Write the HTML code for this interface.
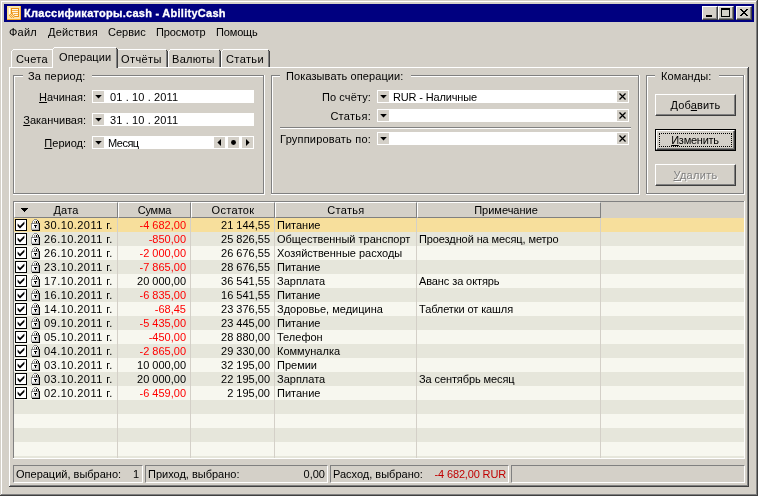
<!DOCTYPE html>
<html lang="ru"><head><meta charset="utf-8"><title>Классификаторы.cash - AbilityCash</title>
<style>
*{box-sizing:border-box;margin:0;padding:0}
html,body{width:758px;height:496px;overflow:hidden;background:#d4d0c8}
body{position:relative;font-family:"Liberation Sans","DejaVu Sans",sans-serif;font-size:11px;line-height:13px;color:#000;cursor:default}
.a{position:absolute;white-space:nowrap}
.t{position:absolute;white-space:nowrap;height:13px;line-height:13px;will-change:transform}
.r{text-align:right}
.c{text-align:center}
u{text-decoration:underline}
.red{color:#ff0000}
.w{background:#fff}
.g{background:#808080}
.d{background:#404040}
.f{background:#d4d0c8}
.k{background:#000}
.btn{position:absolute;background:#d4d0c8;border:1px solid;border-color:#fff #404040 #404040 #fff;box-shadow:inset -1px -1px 0 #808080, inset 1px 1px 0 #d4d0c8}
.eg{position:absolute;border:1px solid #808080}
.ew{position:absolute;border:1px solid #fff}
.sunk{position:absolute;border:1px solid;border-color:#808080 #fff #fff #808080}
.hdr{position:absolute;top:202px;height:16px;background:#d4d0c8;border:1px solid;border-color:#fff #808080 #808080 #fff}
</style></head>
<body>
<div class="a f" style="left:0px;top:0px;width:758px;height:496px;"></div>
<div class="a w" style="left:1px;top:1px;width:755px;height:1px;"></div>
<div class="a w" style="left:1px;top:1px;width:1px;height:493px;"></div>
<div class="a d" style="left:0px;top:495px;width:758px;height:1px;"></div>
<div class="a d" style="left:757px;top:0px;width:1px;height:496px;"></div>
<div class="a g" style="left:1px;top:494px;width:756px;height:1px;"></div>
<div class="a g" style="left:756px;top:1px;width:1px;height:494px;"></div>
<div class="a " style="left:4px;top:4px;width:750px;height:18px;background:#000080"></div>
<svg class="a" style="left:7px;top:6px" width="14" height="14" viewBox="0 0 14 14" shape-rendering="crispEdges">
<rect x="0" y="0" width="14" height="14" fill="#fbe3ae"/>
<rect x="0" y="0" width="14" height="1" fill="#fde9a0"/><rect x="0" y="0" width="1" height="14" fill="#fde08a"/>
<rect x="0" y="13" width="14" height="1" fill="#f6ab2c"/><rect x="13" y="0" width="1" height="14" fill="#f8b840"/>
<rect x="13" y="13" width="1" height="1" fill="#ef9510"/>
<rect x="2" y="2" width="1" height="10" fill="#ffffff"/>
<rect x="4" y="2" width="8" height="9" fill="#ec9214"/>
<rect x="5" y="3" width="6" height="7" fill="#f4ae48"/>
<rect x="5" y="3" width="6" height="1" fill="#fff6e4"/><rect x="5" y="5" width="6" height="1" fill="#fff6e4"/><rect x="6" y="7" width="5" height="1" fill="#fff6e4"/><rect x="8" y="9" width="3" height="1" fill="#fff6e4"/>
<rect x="2" y="8" width="6" height="4" fill="#fbdc9e"/>
<rect x="3" y="8" width="1" height="1" fill="#f0a030"/><rect x="5" y="8" width="1" height="1" fill="#f0a030"/><rect x="7" y="8" width="1" height="1" fill="#f0a030"/>
<rect x="2" y="9" width="1" height="1" fill="#f0a030"/><rect x="4" y="9" width="1" height="1" fill="#f0a030"/><rect x="6" y="9" width="1" height="1" fill="#f0a030"/>
<rect x="3" y="10" width="1" height="1" fill="#f0a030"/><rect x="5" y="10" width="1" height="1" fill="#f0a030"/><rect x="7" y="10" width="1" height="1" fill="#f0a030"/>
<rect x="4" y="11" width="1" height="1" fill="#f0a030"/><rect x="6" y="11" width="1" height="1" fill="#f0a030"/>
</svg>
<div class="t " style="left:24px;top:7px;color:#fff;font-weight:bold;letter-spacing:0.27px;-webkit-text-stroke:0.3px #fff;">Классификаторы.cash - AbilityCash</div>
<div class="btn" style="left:702px;top:6px;width:16px;height:14px"></div>
<div class="a k" style="left:706px;top:15px;width:6px;height:2px;"></div>
<div class="btn" style="left:718px;top:6px;width:16px;height:14px"></div>
<div class="a" style="left:721px;top:8px;width:9px;height:9px;border:1px solid #000;border-top-width:2px"></div>
<div class="btn" style="left:736px;top:6px;width:16px;height:14px"></div>
<svg class="a" style="left:740px;top:9px" width="8" height="7" viewBox="0 0 8 7" shape-rendering="crispEdges"><path d="M0 0h2v1h1v1h2v-1h1v-1h2v1h-1v1h-1v1h-1v1h1v1h1v1h1v1h-2v-1h-1v-1h-2v1h-1v1h-2v-1h1v-1h1v-1h1v-1h-1v-1h-1v-1h-1z" fill="#000"/></svg>
<div class="t " style="left:9px;top:26px;letter-spacing:0.2px;">Файл</div>
<div class="t " style="left:48px;top:26px;letter-spacing:0.2px;">Действия</div>
<div class="t " style="left:108px;top:26px;letter-spacing:0px;">Сервис</div>
<div class="t " style="left:156px;top:26px;letter-spacing:-0.1px;">Просмотр</div>
<div class="t " style="left:216px;top:26px;letter-spacing:-0.15px;">Помощь</div>
<div class="a f" style="left:9px;top:67px;width:740px;height:420px;"></div>
<div class="a w" style="left:9px;top:67px;width:739px;height:1px;"></div>
<div class="a w" style="left:9px;top:67px;width:1px;height:419px;"></div>
<div class="a d" style="left:9px;top:486px;width:740px;height:1px;"></div>
<div class="a d" style="left:748px;top:67px;width:1px;height:420px;"></div>
<div class="a g" style="left:10px;top:485px;width:738px;height:1px;"></div>
<div class="a g" style="left:747px;top:68px;width:1px;height:418px;"></div>
<div class="a" style="left:11px;top:49px;width:44px;height:18px"><div class="a f" style="left:1px;top:2px;width:41px;height:16px"></div><div class="a f" style="left:2px;top:1px;width:40px;height:1px"></div><div class="a w" style="left:2px;top:0;width:40px;height:1px"></div><div class="a w" style="left:1px;top:1px;width:1px;height:1px"></div><div class="a w" style="left:0;top:2px;width:1px;height:16px"></div><div class="a d" style="left:43px;top:2px;width:1px;height:16px"></div><div class="a d" style="left:42px;top:1px;width:1px;height:1px"></div><div class="a g" style="left:42px;top:2px;width:1px;height:16px"></div></div>
<div class="t " style="left:16px;top:53px;letter-spacing:0.3px;">Счета</div>
<div class="a" style="left:116px;top:49px;width:52px;height:18px"><div class="a f" style="left:1px;top:2px;width:49px;height:16px"></div><div class="a f" style="left:2px;top:1px;width:48px;height:1px"></div><div class="a w" style="left:2px;top:0;width:48px;height:1px"></div><div class="a w" style="left:1px;top:1px;width:1px;height:1px"></div><div class="a w" style="left:0;top:2px;width:1px;height:16px"></div><div class="a d" style="left:51px;top:2px;width:1px;height:16px"></div><div class="a d" style="left:50px;top:1px;width:1px;height:1px"></div><div class="a g" style="left:50px;top:2px;width:1px;height:16px"></div></div>
<div class="t " style="left:121px;top:53px;letter-spacing:0.4px;">Отчёты</div>
<div class="a" style="left:168px;top:49px;width:53px;height:18px"><div class="a f" style="left:1px;top:2px;width:50px;height:16px"></div><div class="a f" style="left:2px;top:1px;width:49px;height:1px"></div><div class="a w" style="left:2px;top:0;width:49px;height:1px"></div><div class="a w" style="left:1px;top:1px;width:1px;height:1px"></div><div class="a w" style="left:0;top:2px;width:1px;height:16px"></div><div class="a d" style="left:52px;top:2px;width:1px;height:16px"></div><div class="a d" style="left:51px;top:1px;width:1px;height:1px"></div><div class="a g" style="left:51px;top:2px;width:1px;height:16px"></div></div>
<div class="t " style="left:172px;top:53px;letter-spacing:0.3px;">Валюты</div>
<div class="a" style="left:221px;top:49px;width:49px;height:18px"><div class="a f" style="left:1px;top:2px;width:46px;height:16px"></div><div class="a f" style="left:2px;top:1px;width:45px;height:1px"></div><div class="a w" style="left:2px;top:0;width:45px;height:1px"></div><div class="a w" style="left:1px;top:1px;width:1px;height:1px"></div><div class="a w" style="left:0;top:2px;width:1px;height:16px"></div><div class="a d" style="left:48px;top:2px;width:1px;height:16px"></div><div class="a d" style="left:47px;top:1px;width:1px;height:1px"></div><div class="a g" style="left:47px;top:2px;width:1px;height:16px"></div></div>
<div class="t " style="left:226px;top:53px;letter-spacing:0.4px;">Статьи</div>
<div class="a" style="left:52px;top:47px;width:66px;height:21px"><div class="a f" style="left:1px;top:2px;width:63px;height:19px"></div><div class="a f" style="left:2px;top:1px;width:62px;height:1px"></div><div class="a w" style="left:2px;top:0;width:62px;height:1px"></div><div class="a w" style="left:1px;top:1px;width:1px;height:1px"></div><div class="a w" style="left:0;top:2px;width:1px;height:19px"></div><div class="a d" style="left:65px;top:2px;width:1px;height:19px"></div><div class="a d" style="left:64px;top:1px;width:1px;height:1px"></div><div class="a g" style="left:64px;top:2px;width:1px;height:19px"></div></div>
<div class="t " style="left:59px;top:51px;letter-spacing:0.1px;">Операции</div>
<div class="ew" style="left:14px;top:76px;width:251px;height:119px"></div>
<div class="eg" style="left:13px;top:75px;width:251px;height:119px"></div>
<div class="a w" style="left:13px;top:194px;width:1px;height:1px;"></div>
<div class="a w" style="left:264px;top:75px;width:1px;height:1px;"></div>
<div class="a f" style="left:23px;top:75px;width:69px;height:2px;"></div>
<div class="t " style="left:28px;top:70px;letter-spacing:0.2px;">За период:</div>
<div class="ew" style="left:272px;top:76px;width:368px;height:119px"></div>
<div class="eg" style="left:271px;top:75px;width:368px;height:119px"></div>
<div class="a w" style="left:271px;top:194px;width:1px;height:1px;"></div>
<div class="a w" style="left:639px;top:75px;width:1px;height:1px;"></div>
<div class="a f" style="left:280px;top:75px;width:131px;height:2px;"></div>
<div class="t " style="left:286px;top:70px;letter-spacing:0.1px;">Показывать операции:</div>
<div class="ew" style="left:647px;top:76px;width:98px;height:119px"></div>
<div class="eg" style="left:646px;top:75px;width:98px;height:119px"></div>
<div class="a w" style="left:646px;top:194px;width:1px;height:1px;"></div>
<div class="a w" style="left:744px;top:75px;width:1px;height:1px;"></div>
<div class="a f" style="left:655px;top:75px;width:64px;height:2px;"></div>
<div class="t " style="left:661px;top:70px;letter-spacing:0.1px;">Команды:</div>
<div class="t r" style="left:20px;top:91px;width:66px;"><u>Н</u>ачиная:</div>
<div class="a w" style="left:92px;top:90px;width:162px;height:13px;"></div>
<div class="a f" style="left:93px;top:91px;width:11px;height:11px;"></div>
<svg class="a" style="left:95px;top:95px" width="7" height="4" viewBox="0 0 7 4"><path d="M0.2 0H6.8L3.5 3.5Z" fill="#000"/></svg>
<div class="t " style="left:110px;top:91px;"><span style="letter-spacing:0.12px">01 . 10 . 2011</span></div>
<div class="t r" style="left:20px;top:114px;width:66px;"><u>З</u>аканчивая:</div>
<div class="a w" style="left:92px;top:113px;width:162px;height:13px;"></div>
<div class="a f" style="left:93px;top:114px;width:11px;height:11px;"></div>
<svg class="a" style="left:95px;top:118px" width="7" height="4" viewBox="0 0 7 4"><path d="M0.2 0H6.8L3.5 3.5Z" fill="#000"/></svg>
<div class="t " style="left:110px;top:114px;"><span style="letter-spacing:0.12px">31 . 10 . 2011</span></div>
<div class="t r" style="left:20px;top:137px;width:66px;"><u>П</u>ериод:</div>
<div class="a w" style="left:92px;top:136px;width:162px;height:13px;"></div>
<div class="a f" style="left:93px;top:137px;width:11px;height:11px;"></div>
<svg class="a" style="left:95px;top:141px" width="7" height="4" viewBox="0 0 7 4"><path d="M0.2 0H6.8L3.5 3.5Z" fill="#000"/></svg>
<div class="t " style="left:108px;top:137px;"><span style="letter-spacing:-0.5px">Месяц</span></div>
<div class="a f" style="left:214px;top:137px;width:11px;height:11px;"></div>
<svg class="a" style="left:217px;top:139px" width="4" height="7" viewBox="0 0 4 7"><path d="M4 0V7L0.4 3.5Z" fill="#000"/></svg>
<div class="a f" style="left:228px;top:137px;width:11px;height:11px;"></div>
<svg class="a" style="left:231px;top:140px" width="5" height="5" viewBox="0 0 5 5"><circle cx="2.5" cy="2.5" r="2.45" fill="#000"/></svg>
<div class="a f" style="left:242px;top:137px;width:11px;height:11px;"></div>
<svg class="a" style="left:246px;top:139px" width="4" height="7" viewBox="0 0 4 7"><path d="M0 0V7L3.6 3.5Z" fill="#000"/></svg>
<div class="t r" style="left:280px;top:91px;width:91px;letter-spacing:0.12px;">По счёту:</div>
<div class="a w" style="left:377px;top:90px;width:252px;height:13px;"></div>
<div class="a f" style="left:378px;top:91px;width:11px;height:11px;"></div>
<svg class="a" style="left:380px;top:95px" width="7" height="4" viewBox="0 0 7 4"><path d="M0.2 0H6.8L3.5 3.5Z" fill="#000"/></svg>
<div class="t " style="left:393px;top:91px;"><span style="letter-spacing:-0.15px">RUR - Наличные</span></div>
<div class="a f" style="left:617px;top:91px;width:11px;height:11px;"></div>
<svg class="a" style="left:619px;top:93px" width="7" height="7" viewBox="0 0 7 7"><path d="M0.5 0.5L6.5 6.5M6.5 0.5L0.5 6.5" stroke="#000" stroke-width="1.25" stroke-linecap="butt" fill="none"/></svg>
<div class="t r" style="left:280px;top:110px;width:91px;letter-spacing:0.3px;">Статья:</div>
<div class="a w" style="left:377px;top:109px;width:252px;height:13px;"></div>
<div class="a f" style="left:378px;top:110px;width:11px;height:11px;"></div>
<svg class="a" style="left:380px;top:114px" width="7" height="4" viewBox="0 0 7 4"><path d="M0.2 0H6.8L3.5 3.5Z" fill="#000"/></svg>
<div class="a f" style="left:617px;top:110px;width:11px;height:11px;"></div>
<svg class="a" style="left:619px;top:112px" width="7" height="7" viewBox="0 0 7 7"><path d="M0.5 0.5L6.5 6.5M6.5 0.5L0.5 6.5" stroke="#000" stroke-width="1.25" stroke-linecap="butt" fill="none"/></svg>
<div class="a g" style="left:280px;top:127px;width:351px;height:1px;"></div>
<div class="a w" style="left:280px;top:128px;width:351px;height:1px;"></div>
<div class="t r" style="left:270px;top:133px;width:101px;letter-spacing:0.2px;">Группировать по:</div>
<div class="a w" style="left:377px;top:132px;width:252px;height:13px;"></div>
<div class="a f" style="left:378px;top:133px;width:11px;height:11px;"></div>
<svg class="a" style="left:380px;top:137px" width="7" height="4" viewBox="0 0 7 4"><path d="M0.2 0H6.8L3.5 3.5Z" fill="#000"/></svg>
<div class="a f" style="left:617px;top:133px;width:11px;height:11px;"></div>
<svg class="a" style="left:619px;top:135px" width="7" height="7" viewBox="0 0 7 7"><path d="M0.5 0.5L6.5 6.5M6.5 0.5L0.5 6.5" stroke="#000" stroke-width="1.25" stroke-linecap="butt" fill="none"/></svg>
<div class="btn" style="left:655px;top:94px;width:81px;height:22px"></div>
<div class="t c" style="left:655px;top:99px;width:81px;"><span style="letter-spacing:0.15px">Доб<u>а</u>вить</span></div>
<div class="a k" style="left:655px;top:129px;width:81px;height:22px;"></div>
<div class="btn" style="left:656px;top:130px;width:79px;height:20px;border-color:#fff #404040 #404040 #fff"></div>
<div class="a" style="left:659px;top:133px;width:73px;height:14px;border:1px dotted #000"></div>
<div class="t c" style="left:655px;top:134px;width:81px;"><span style="letter-spacing:-0.25px;position:relative;left:-0.5px"><u>И</u>зменить</span></div>
<div class="btn" style="left:655px;top:164px;width:81px;height:22px"></div>
<div class="t c" style="left:655px;top:169px;width:81px;color:#808080;text-shadow:1px 1px 0 #fff;"><span style="letter-spacing:0.3px"><u>У</u>далить</span></div>
<div class="a " style="left:13px;top:201px;width:732px;height:258px;background:#f7f7ef"></div>
<div class="a " style="left:14px;top:218px;width:730px;height:14px;background:#f7df9c"></div>
<div class="a " style="left:14px;top:232px;width:730px;height:14px;background:#e6e6db"></div>
<div class="a " style="left:14px;top:246px;width:730px;height:14px;background:#f7f7ef"></div>
<div class="a " style="left:14px;top:260px;width:730px;height:14px;background:#e6e6db"></div>
<div class="a " style="left:14px;top:274px;width:730px;height:14px;background:#f7f7ef"></div>
<div class="a " style="left:14px;top:288px;width:730px;height:14px;background:#e6e6db"></div>
<div class="a " style="left:14px;top:302px;width:730px;height:14px;background:#f7f7ef"></div>
<div class="a " style="left:14px;top:316px;width:730px;height:14px;background:#e6e6db"></div>
<div class="a " style="left:14px;top:330px;width:730px;height:14px;background:#f7f7ef"></div>
<div class="a " style="left:14px;top:344px;width:730px;height:14px;background:#e6e6db"></div>
<div class="a " style="left:14px;top:358px;width:730px;height:14px;background:#f7f7ef"></div>
<div class="a " style="left:14px;top:372px;width:730px;height:14px;background:#e6e6db"></div>
<div class="a " style="left:14px;top:386px;width:730px;height:14px;background:#f7f7ef"></div>
<div class="a " style="left:14px;top:400px;width:730px;height:14px;background:#e6e6db"></div>
<div class="a " style="left:14px;top:414px;width:730px;height:14px;background:#f7f7ef"></div>
<div class="a " style="left:14px;top:428px;width:730px;height:14px;background:#e6e6db"></div>
<div class="a " style="left:14px;top:442px;width:730px;height:14px;background:#f7f7ef"></div>
<div class="a " style="left:14px;top:456px;width:730px;height:2px;background:#e6e6db"></div>
<div class="a " style="left:117px;top:218px;width:1px;height:240px;background:#d4d0c8"></div>
<div class="a " style="left:190px;top:218px;width:1px;height:240px;background:#d4d0c8"></div>
<div class="a " style="left:274px;top:218px;width:1px;height:240px;background:#d4d0c8"></div>
<div class="a " style="left:416px;top:218px;width:1px;height:240px;background:#d4d0c8"></div>
<div class="a " style="left:600px;top:218px;width:1px;height:240px;background:#d4d0c8"></div>
<div class="a f" style="left:14px;top:202px;width:730px;height:16px;"></div>
<div class="hdr" style="left:14px;width:104px"></div>
<div class="t c" style="left:14px;top:204px;width:104px;letter-spacing:0.2px;">Дата</div>
<div class="hdr" style="left:118px;width:73px"></div>
<div class="t c" style="left:118px;top:204px;width:73px;letter-spacing:-0.2px;">Сумма</div>
<div class="hdr" style="left:191px;width:84px"></div>
<div class="t c" style="left:191px;top:204px;width:84px;letter-spacing:0.3px;">Остаток</div>
<div class="hdr" style="left:275px;width:142px"></div>
<div class="t c" style="left:275px;top:204px;width:142px;letter-spacing:0.3px;">Статья</div>
<div class="hdr" style="left:417px;width:184px"></div>
<div class="t c" style="left:414px;top:204px;width:184px;">Примечание</div>
<svg class="a" style="left:21px;top:208px" width="7" height="4" viewBox="0 0 7 4" shape-rendering="crispEdges"><path d="M0 0h7v1h-1v1h-1v1h-1v1h-1v-1h-1v-1h-1v-1h-1z" fill="#000"/></svg>
<div class="a" style="left:15px;top:219px;width:12px;height:12px;background:#fff;border:1px solid #000"></div>
<svg class="a" style="left:17px;top:221px" width="8" height="8" viewBox="0 0 8 8"><path d="M0.6 2.6L0.6 5L3 7.4L7.4 3L7.4 0.6L3 5Z" fill="#000"/></svg>
<svg class="a" style="left:31px;top:219px" width="9" height="12" viewBox="0 0 9 12" shape-rendering="crispEdges"><rect x="3" y="0" width="3" height="1" fill="#909090"/><rect x="2" y="1" width="1" height="1" fill="#a0a0a0"/><rect x="3" y="1" width="1" height="1" fill="#ffffff"/><rect x="4" y="1" width="1" height="1" fill="#e0e0e0"/><rect x="5" y="1" width="1" height="1" fill="#ffffff"/><rect x="6" y="1" width="1" height="1" fill="#383838"/><rect x="1" y="2" width="1" height="1" fill="#909090"/><rect x="2" y="2" width="1" height="1" fill="#ffffff"/><rect x="3" y="2" width="1" height="1" fill="#909090"/><rect x="5" y="2" width="1" height="1" fill="#000000"/><rect x="6" y="2" width="1" height="1" fill="#e0e0e0"/><rect x="7" y="2" width="1" height="1" fill="#000000"/><rect x="1" y="3" width="1" height="1" fill="#909090"/><rect x="2" y="3" width="1" height="1" fill="#ffffff"/><rect x="3" y="3" width="1" height="1" fill="#909090"/><rect x="5" y="3" width="1" height="1" fill="#000000"/><rect x="6" y="3" width="1" height="1" fill="#e0e0e0"/><rect x="7" y="3" width="1" height="1" fill="#000000"/><rect x="0" y="4" width="8" height="1" fill="#808080"/><rect x="8" y="4" width="1" height="1" fill="#000000"/><rect x="0" y="5" width="1" height="1" fill="#909090"/><rect x="1" y="5" width="5" height="1" fill="#ffffff"/><rect x="6" y="5" width="1" height="1" fill="#e0e0e0"/><rect x="7" y="5" width="1" height="1" fill="#b0b0b0"/><rect x="8" y="5" width="1" height="1" fill="#000000"/><rect x="0" y="6" width="1" height="1" fill="#909090"/><rect x="1" y="6" width="2" height="1" fill="#ffffff"/><rect x="3" y="6" width="3" height="1" fill="#000000"/><rect x="6" y="6" width="1" height="1" fill="#e0e0e0"/><rect x="7" y="6" width="1" height="1" fill="#b0b0b0"/><rect x="8" y="6" width="1" height="1" fill="#000000"/><rect x="0" y="7" width="1" height="1" fill="#909090"/><rect x="1" y="7" width="2" height="1" fill="#ffffff"/><rect x="3" y="7" width="1" height="1" fill="#e0e0e0"/><rect x="4" y="7" width="1" height="1" fill="#000000"/><rect x="5" y="7" width="2" height="1" fill="#e0e0e0"/><rect x="7" y="7" width="1" height="1" fill="#b0b0b0"/><rect x="8" y="7" width="1" height="1" fill="#000000"/><rect x="0" y="8" width="1" height="1" fill="#909090"/><rect x="1" y="8" width="1" height="1" fill="#ffffff"/><rect x="2" y="8" width="1" height="1" fill="#e0e0e0"/><rect x="3" y="8" width="1" height="1" fill="#ffffff"/><rect x="4" y="8" width="1" height="1" fill="#000000"/><rect x="5" y="8" width="2" height="1" fill="#e0e0e0"/><rect x="7" y="8" width="1" height="1" fill="#b0b0b0"/><rect x="8" y="8" width="1" height="1" fill="#000000"/><rect x="0" y="9" width="1" height="1" fill="#909090"/><rect x="1" y="9" width="6" height="1" fill="#e0e0e0"/><rect x="7" y="9" width="1" height="1" fill="#b0b0b0"/><rect x="8" y="9" width="1" height="1" fill="#000000"/><rect x="0" y="10" width="1" height="1" fill="#909090"/><rect x="1" y="10" width="7" height="1" fill="#b0b0b0"/><rect x="8" y="10" width="1" height="1" fill="#000000"/><rect x="1" y="11" width="8" height="1" fill="#000000"/></svg>
<div class="t " style="left:44px;top:219px;letter-spacing:0.45px;">30.10.2011 г.</div>
<div class="t r red" style="left:118px;top:219px;width:68px;">-4 682,00</div>
<div class="t r" style="left:191px;top:219px;width:79px;">21 144,55</div>
<div class="t " style="left:277px;top:219px;">Питание</div>
<div class="t " style="left:419px;top:219px;letter-spacing:-0.1px;"></div>
<div class="a" style="left:15px;top:233px;width:12px;height:12px;background:#fff;border:1px solid #000"></div>
<svg class="a" style="left:17px;top:235px" width="8" height="8" viewBox="0 0 8 8"><path d="M0.6 2.6L0.6 5L3 7.4L7.4 3L7.4 0.6L3 5Z" fill="#000"/></svg>
<svg class="a" style="left:31px;top:233px" width="9" height="12" viewBox="0 0 9 12" shape-rendering="crispEdges"><rect x="3" y="0" width="3" height="1" fill="#909090"/><rect x="2" y="1" width="1" height="1" fill="#a0a0a0"/><rect x="3" y="1" width="1" height="1" fill="#ffffff"/><rect x="4" y="1" width="1" height="1" fill="#e0e0e0"/><rect x="5" y="1" width="1" height="1" fill="#ffffff"/><rect x="6" y="1" width="1" height="1" fill="#383838"/><rect x="1" y="2" width="1" height="1" fill="#909090"/><rect x="2" y="2" width="1" height="1" fill="#ffffff"/><rect x="3" y="2" width="1" height="1" fill="#909090"/><rect x="5" y="2" width="1" height="1" fill="#000000"/><rect x="6" y="2" width="1" height="1" fill="#e0e0e0"/><rect x="7" y="2" width="1" height="1" fill="#000000"/><rect x="1" y="3" width="1" height="1" fill="#909090"/><rect x="2" y="3" width="1" height="1" fill="#ffffff"/><rect x="3" y="3" width="1" height="1" fill="#909090"/><rect x="5" y="3" width="1" height="1" fill="#000000"/><rect x="6" y="3" width="1" height="1" fill="#e0e0e0"/><rect x="7" y="3" width="1" height="1" fill="#000000"/><rect x="0" y="4" width="8" height="1" fill="#808080"/><rect x="8" y="4" width="1" height="1" fill="#000000"/><rect x="0" y="5" width="1" height="1" fill="#909090"/><rect x="1" y="5" width="5" height="1" fill="#ffffff"/><rect x="6" y="5" width="1" height="1" fill="#e0e0e0"/><rect x="7" y="5" width="1" height="1" fill="#b0b0b0"/><rect x="8" y="5" width="1" height="1" fill="#000000"/><rect x="0" y="6" width="1" height="1" fill="#909090"/><rect x="1" y="6" width="2" height="1" fill="#ffffff"/><rect x="3" y="6" width="3" height="1" fill="#000000"/><rect x="6" y="6" width="1" height="1" fill="#e0e0e0"/><rect x="7" y="6" width="1" height="1" fill="#b0b0b0"/><rect x="8" y="6" width="1" height="1" fill="#000000"/><rect x="0" y="7" width="1" height="1" fill="#909090"/><rect x="1" y="7" width="2" height="1" fill="#ffffff"/><rect x="3" y="7" width="1" height="1" fill="#e0e0e0"/><rect x="4" y="7" width="1" height="1" fill="#000000"/><rect x="5" y="7" width="2" height="1" fill="#e0e0e0"/><rect x="7" y="7" width="1" height="1" fill="#b0b0b0"/><rect x="8" y="7" width="1" height="1" fill="#000000"/><rect x="0" y="8" width="1" height="1" fill="#909090"/><rect x="1" y="8" width="1" height="1" fill="#ffffff"/><rect x="2" y="8" width="1" height="1" fill="#e0e0e0"/><rect x="3" y="8" width="1" height="1" fill="#ffffff"/><rect x="4" y="8" width="1" height="1" fill="#000000"/><rect x="5" y="8" width="2" height="1" fill="#e0e0e0"/><rect x="7" y="8" width="1" height="1" fill="#b0b0b0"/><rect x="8" y="8" width="1" height="1" fill="#000000"/><rect x="0" y="9" width="1" height="1" fill="#909090"/><rect x="1" y="9" width="6" height="1" fill="#e0e0e0"/><rect x="7" y="9" width="1" height="1" fill="#b0b0b0"/><rect x="8" y="9" width="1" height="1" fill="#000000"/><rect x="0" y="10" width="1" height="1" fill="#909090"/><rect x="1" y="10" width="7" height="1" fill="#b0b0b0"/><rect x="8" y="10" width="1" height="1" fill="#000000"/><rect x="1" y="11" width="8" height="1" fill="#000000"/></svg>
<div class="t " style="left:44px;top:233px;letter-spacing:0.45px;">26.10.2011 г.</div>
<div class="t r red" style="left:118px;top:233px;width:68px;">-850,00</div>
<div class="t r" style="left:191px;top:233px;width:79px;">25 826,55</div>
<div class="t " style="left:277px;top:233px;">Общественный транспорт</div>
<div class="t " style="left:419px;top:233px;letter-spacing:-0.1px;">Проездной на месяц, метро</div>
<div class="a" style="left:15px;top:247px;width:12px;height:12px;background:#fff;border:1px solid #000"></div>
<svg class="a" style="left:17px;top:249px" width="8" height="8" viewBox="0 0 8 8"><path d="M0.6 2.6L0.6 5L3 7.4L7.4 3L7.4 0.6L3 5Z" fill="#000"/></svg>
<svg class="a" style="left:31px;top:247px" width="9" height="12" viewBox="0 0 9 12" shape-rendering="crispEdges"><rect x="3" y="0" width="3" height="1" fill="#909090"/><rect x="2" y="1" width="1" height="1" fill="#a0a0a0"/><rect x="3" y="1" width="1" height="1" fill="#ffffff"/><rect x="4" y="1" width="1" height="1" fill="#e0e0e0"/><rect x="5" y="1" width="1" height="1" fill="#ffffff"/><rect x="6" y="1" width="1" height="1" fill="#383838"/><rect x="1" y="2" width="1" height="1" fill="#909090"/><rect x="2" y="2" width="1" height="1" fill="#ffffff"/><rect x="3" y="2" width="1" height="1" fill="#909090"/><rect x="5" y="2" width="1" height="1" fill="#000000"/><rect x="6" y="2" width="1" height="1" fill="#e0e0e0"/><rect x="7" y="2" width="1" height="1" fill="#000000"/><rect x="1" y="3" width="1" height="1" fill="#909090"/><rect x="2" y="3" width="1" height="1" fill="#ffffff"/><rect x="3" y="3" width="1" height="1" fill="#909090"/><rect x="5" y="3" width="1" height="1" fill="#000000"/><rect x="6" y="3" width="1" height="1" fill="#e0e0e0"/><rect x="7" y="3" width="1" height="1" fill="#000000"/><rect x="0" y="4" width="8" height="1" fill="#808080"/><rect x="8" y="4" width="1" height="1" fill="#000000"/><rect x="0" y="5" width="1" height="1" fill="#909090"/><rect x="1" y="5" width="5" height="1" fill="#ffffff"/><rect x="6" y="5" width="1" height="1" fill="#e0e0e0"/><rect x="7" y="5" width="1" height="1" fill="#b0b0b0"/><rect x="8" y="5" width="1" height="1" fill="#000000"/><rect x="0" y="6" width="1" height="1" fill="#909090"/><rect x="1" y="6" width="2" height="1" fill="#ffffff"/><rect x="3" y="6" width="3" height="1" fill="#000000"/><rect x="6" y="6" width="1" height="1" fill="#e0e0e0"/><rect x="7" y="6" width="1" height="1" fill="#b0b0b0"/><rect x="8" y="6" width="1" height="1" fill="#000000"/><rect x="0" y="7" width="1" height="1" fill="#909090"/><rect x="1" y="7" width="2" height="1" fill="#ffffff"/><rect x="3" y="7" width="1" height="1" fill="#e0e0e0"/><rect x="4" y="7" width="1" height="1" fill="#000000"/><rect x="5" y="7" width="2" height="1" fill="#e0e0e0"/><rect x="7" y="7" width="1" height="1" fill="#b0b0b0"/><rect x="8" y="7" width="1" height="1" fill="#000000"/><rect x="0" y="8" width="1" height="1" fill="#909090"/><rect x="1" y="8" width="1" height="1" fill="#ffffff"/><rect x="2" y="8" width="1" height="1" fill="#e0e0e0"/><rect x="3" y="8" width="1" height="1" fill="#ffffff"/><rect x="4" y="8" width="1" height="1" fill="#000000"/><rect x="5" y="8" width="2" height="1" fill="#e0e0e0"/><rect x="7" y="8" width="1" height="1" fill="#b0b0b0"/><rect x="8" y="8" width="1" height="1" fill="#000000"/><rect x="0" y="9" width="1" height="1" fill="#909090"/><rect x="1" y="9" width="6" height="1" fill="#e0e0e0"/><rect x="7" y="9" width="1" height="1" fill="#b0b0b0"/><rect x="8" y="9" width="1" height="1" fill="#000000"/><rect x="0" y="10" width="1" height="1" fill="#909090"/><rect x="1" y="10" width="7" height="1" fill="#b0b0b0"/><rect x="8" y="10" width="1" height="1" fill="#000000"/><rect x="1" y="11" width="8" height="1" fill="#000000"/></svg>
<div class="t " style="left:44px;top:247px;letter-spacing:0.45px;">26.10.2011 г.</div>
<div class="t r red" style="left:118px;top:247px;width:68px;">-2 000,00</div>
<div class="t r" style="left:191px;top:247px;width:79px;">26 676,55</div>
<div class="t " style="left:277px;top:247px;">Хозяйственные расходы</div>
<div class="t " style="left:419px;top:247px;letter-spacing:-0.1px;"></div>
<div class="a" style="left:15px;top:261px;width:12px;height:12px;background:#fff;border:1px solid #000"></div>
<svg class="a" style="left:17px;top:263px" width="8" height="8" viewBox="0 0 8 8"><path d="M0.6 2.6L0.6 5L3 7.4L7.4 3L7.4 0.6L3 5Z" fill="#000"/></svg>
<svg class="a" style="left:31px;top:261px" width="9" height="12" viewBox="0 0 9 12" shape-rendering="crispEdges"><rect x="3" y="0" width="3" height="1" fill="#909090"/><rect x="2" y="1" width="1" height="1" fill="#a0a0a0"/><rect x="3" y="1" width="1" height="1" fill="#ffffff"/><rect x="4" y="1" width="1" height="1" fill="#e0e0e0"/><rect x="5" y="1" width="1" height="1" fill="#ffffff"/><rect x="6" y="1" width="1" height="1" fill="#383838"/><rect x="1" y="2" width="1" height="1" fill="#909090"/><rect x="2" y="2" width="1" height="1" fill="#ffffff"/><rect x="3" y="2" width="1" height="1" fill="#909090"/><rect x="5" y="2" width="1" height="1" fill="#000000"/><rect x="6" y="2" width="1" height="1" fill="#e0e0e0"/><rect x="7" y="2" width="1" height="1" fill="#000000"/><rect x="1" y="3" width="1" height="1" fill="#909090"/><rect x="2" y="3" width="1" height="1" fill="#ffffff"/><rect x="3" y="3" width="1" height="1" fill="#909090"/><rect x="5" y="3" width="1" height="1" fill="#000000"/><rect x="6" y="3" width="1" height="1" fill="#e0e0e0"/><rect x="7" y="3" width="1" height="1" fill="#000000"/><rect x="0" y="4" width="8" height="1" fill="#808080"/><rect x="8" y="4" width="1" height="1" fill="#000000"/><rect x="0" y="5" width="1" height="1" fill="#909090"/><rect x="1" y="5" width="5" height="1" fill="#ffffff"/><rect x="6" y="5" width="1" height="1" fill="#e0e0e0"/><rect x="7" y="5" width="1" height="1" fill="#b0b0b0"/><rect x="8" y="5" width="1" height="1" fill="#000000"/><rect x="0" y="6" width="1" height="1" fill="#909090"/><rect x="1" y="6" width="2" height="1" fill="#ffffff"/><rect x="3" y="6" width="3" height="1" fill="#000000"/><rect x="6" y="6" width="1" height="1" fill="#e0e0e0"/><rect x="7" y="6" width="1" height="1" fill="#b0b0b0"/><rect x="8" y="6" width="1" height="1" fill="#000000"/><rect x="0" y="7" width="1" height="1" fill="#909090"/><rect x="1" y="7" width="2" height="1" fill="#ffffff"/><rect x="3" y="7" width="1" height="1" fill="#e0e0e0"/><rect x="4" y="7" width="1" height="1" fill="#000000"/><rect x="5" y="7" width="2" height="1" fill="#e0e0e0"/><rect x="7" y="7" width="1" height="1" fill="#b0b0b0"/><rect x="8" y="7" width="1" height="1" fill="#000000"/><rect x="0" y="8" width="1" height="1" fill="#909090"/><rect x="1" y="8" width="1" height="1" fill="#ffffff"/><rect x="2" y="8" width="1" height="1" fill="#e0e0e0"/><rect x="3" y="8" width="1" height="1" fill="#ffffff"/><rect x="4" y="8" width="1" height="1" fill="#000000"/><rect x="5" y="8" width="2" height="1" fill="#e0e0e0"/><rect x="7" y="8" width="1" height="1" fill="#b0b0b0"/><rect x="8" y="8" width="1" height="1" fill="#000000"/><rect x="0" y="9" width="1" height="1" fill="#909090"/><rect x="1" y="9" width="6" height="1" fill="#e0e0e0"/><rect x="7" y="9" width="1" height="1" fill="#b0b0b0"/><rect x="8" y="9" width="1" height="1" fill="#000000"/><rect x="0" y="10" width="1" height="1" fill="#909090"/><rect x="1" y="10" width="7" height="1" fill="#b0b0b0"/><rect x="8" y="10" width="1" height="1" fill="#000000"/><rect x="1" y="11" width="8" height="1" fill="#000000"/></svg>
<div class="t " style="left:44px;top:261px;letter-spacing:0.45px;">23.10.2011 г.</div>
<div class="t r red" style="left:118px;top:261px;width:68px;">-7 865,00</div>
<div class="t r" style="left:191px;top:261px;width:79px;">28 676,55</div>
<div class="t " style="left:277px;top:261px;">Питание</div>
<div class="t " style="left:419px;top:261px;letter-spacing:-0.1px;"></div>
<div class="a" style="left:15px;top:275px;width:12px;height:12px;background:#fff;border:1px solid #000"></div>
<svg class="a" style="left:17px;top:277px" width="8" height="8" viewBox="0 0 8 8"><path d="M0.6 2.6L0.6 5L3 7.4L7.4 3L7.4 0.6L3 5Z" fill="#000"/></svg>
<svg class="a" style="left:31px;top:275px" width="9" height="12" viewBox="0 0 9 12" shape-rendering="crispEdges"><rect x="3" y="0" width="3" height="1" fill="#909090"/><rect x="2" y="1" width="1" height="1" fill="#a0a0a0"/><rect x="3" y="1" width="1" height="1" fill="#ffffff"/><rect x="4" y="1" width="1" height="1" fill="#e0e0e0"/><rect x="5" y="1" width="1" height="1" fill="#ffffff"/><rect x="6" y="1" width="1" height="1" fill="#383838"/><rect x="1" y="2" width="1" height="1" fill="#909090"/><rect x="2" y="2" width="1" height="1" fill="#ffffff"/><rect x="3" y="2" width="1" height="1" fill="#909090"/><rect x="5" y="2" width="1" height="1" fill="#000000"/><rect x="6" y="2" width="1" height="1" fill="#e0e0e0"/><rect x="7" y="2" width="1" height="1" fill="#000000"/><rect x="1" y="3" width="1" height="1" fill="#909090"/><rect x="2" y="3" width="1" height="1" fill="#ffffff"/><rect x="3" y="3" width="1" height="1" fill="#909090"/><rect x="5" y="3" width="1" height="1" fill="#000000"/><rect x="6" y="3" width="1" height="1" fill="#e0e0e0"/><rect x="7" y="3" width="1" height="1" fill="#000000"/><rect x="0" y="4" width="8" height="1" fill="#808080"/><rect x="8" y="4" width="1" height="1" fill="#000000"/><rect x="0" y="5" width="1" height="1" fill="#909090"/><rect x="1" y="5" width="5" height="1" fill="#ffffff"/><rect x="6" y="5" width="1" height="1" fill="#e0e0e0"/><rect x="7" y="5" width="1" height="1" fill="#b0b0b0"/><rect x="8" y="5" width="1" height="1" fill="#000000"/><rect x="0" y="6" width="1" height="1" fill="#909090"/><rect x="1" y="6" width="2" height="1" fill="#ffffff"/><rect x="3" y="6" width="3" height="1" fill="#000000"/><rect x="6" y="6" width="1" height="1" fill="#e0e0e0"/><rect x="7" y="6" width="1" height="1" fill="#b0b0b0"/><rect x="8" y="6" width="1" height="1" fill="#000000"/><rect x="0" y="7" width="1" height="1" fill="#909090"/><rect x="1" y="7" width="2" height="1" fill="#ffffff"/><rect x="3" y="7" width="1" height="1" fill="#e0e0e0"/><rect x="4" y="7" width="1" height="1" fill="#000000"/><rect x="5" y="7" width="2" height="1" fill="#e0e0e0"/><rect x="7" y="7" width="1" height="1" fill="#b0b0b0"/><rect x="8" y="7" width="1" height="1" fill="#000000"/><rect x="0" y="8" width="1" height="1" fill="#909090"/><rect x="1" y="8" width="1" height="1" fill="#ffffff"/><rect x="2" y="8" width="1" height="1" fill="#e0e0e0"/><rect x="3" y="8" width="1" height="1" fill="#ffffff"/><rect x="4" y="8" width="1" height="1" fill="#000000"/><rect x="5" y="8" width="2" height="1" fill="#e0e0e0"/><rect x="7" y="8" width="1" height="1" fill="#b0b0b0"/><rect x="8" y="8" width="1" height="1" fill="#000000"/><rect x="0" y="9" width="1" height="1" fill="#909090"/><rect x="1" y="9" width="6" height="1" fill="#e0e0e0"/><rect x="7" y="9" width="1" height="1" fill="#b0b0b0"/><rect x="8" y="9" width="1" height="1" fill="#000000"/><rect x="0" y="10" width="1" height="1" fill="#909090"/><rect x="1" y="10" width="7" height="1" fill="#b0b0b0"/><rect x="8" y="10" width="1" height="1" fill="#000000"/><rect x="1" y="11" width="8" height="1" fill="#000000"/></svg>
<div class="t " style="left:44px;top:275px;letter-spacing:0.45px;">17.10.2011 г.</div>
<div class="t r" style="left:118px;top:275px;width:68px;">20 000,00</div>
<div class="t r" style="left:191px;top:275px;width:79px;">36 541,55</div>
<div class="t " style="left:277px;top:275px;">Зарплата</div>
<div class="t " style="left:419px;top:275px;letter-spacing:-0.1px;">Аванс за октярь</div>
<div class="a" style="left:15px;top:289px;width:12px;height:12px;background:#fff;border:1px solid #000"></div>
<svg class="a" style="left:17px;top:291px" width="8" height="8" viewBox="0 0 8 8"><path d="M0.6 2.6L0.6 5L3 7.4L7.4 3L7.4 0.6L3 5Z" fill="#000"/></svg>
<svg class="a" style="left:31px;top:289px" width="9" height="12" viewBox="0 0 9 12" shape-rendering="crispEdges"><rect x="3" y="0" width="3" height="1" fill="#909090"/><rect x="2" y="1" width="1" height="1" fill="#a0a0a0"/><rect x="3" y="1" width="1" height="1" fill="#ffffff"/><rect x="4" y="1" width="1" height="1" fill="#e0e0e0"/><rect x="5" y="1" width="1" height="1" fill="#ffffff"/><rect x="6" y="1" width="1" height="1" fill="#383838"/><rect x="1" y="2" width="1" height="1" fill="#909090"/><rect x="2" y="2" width="1" height="1" fill="#ffffff"/><rect x="3" y="2" width="1" height="1" fill="#909090"/><rect x="5" y="2" width="1" height="1" fill="#000000"/><rect x="6" y="2" width="1" height="1" fill="#e0e0e0"/><rect x="7" y="2" width="1" height="1" fill="#000000"/><rect x="1" y="3" width="1" height="1" fill="#909090"/><rect x="2" y="3" width="1" height="1" fill="#ffffff"/><rect x="3" y="3" width="1" height="1" fill="#909090"/><rect x="5" y="3" width="1" height="1" fill="#000000"/><rect x="6" y="3" width="1" height="1" fill="#e0e0e0"/><rect x="7" y="3" width="1" height="1" fill="#000000"/><rect x="0" y="4" width="8" height="1" fill="#808080"/><rect x="8" y="4" width="1" height="1" fill="#000000"/><rect x="0" y="5" width="1" height="1" fill="#909090"/><rect x="1" y="5" width="5" height="1" fill="#ffffff"/><rect x="6" y="5" width="1" height="1" fill="#e0e0e0"/><rect x="7" y="5" width="1" height="1" fill="#b0b0b0"/><rect x="8" y="5" width="1" height="1" fill="#000000"/><rect x="0" y="6" width="1" height="1" fill="#909090"/><rect x="1" y="6" width="2" height="1" fill="#ffffff"/><rect x="3" y="6" width="3" height="1" fill="#000000"/><rect x="6" y="6" width="1" height="1" fill="#e0e0e0"/><rect x="7" y="6" width="1" height="1" fill="#b0b0b0"/><rect x="8" y="6" width="1" height="1" fill="#000000"/><rect x="0" y="7" width="1" height="1" fill="#909090"/><rect x="1" y="7" width="2" height="1" fill="#ffffff"/><rect x="3" y="7" width="1" height="1" fill="#e0e0e0"/><rect x="4" y="7" width="1" height="1" fill="#000000"/><rect x="5" y="7" width="2" height="1" fill="#e0e0e0"/><rect x="7" y="7" width="1" height="1" fill="#b0b0b0"/><rect x="8" y="7" width="1" height="1" fill="#000000"/><rect x="0" y="8" width="1" height="1" fill="#909090"/><rect x="1" y="8" width="1" height="1" fill="#ffffff"/><rect x="2" y="8" width="1" height="1" fill="#e0e0e0"/><rect x="3" y="8" width="1" height="1" fill="#ffffff"/><rect x="4" y="8" width="1" height="1" fill="#000000"/><rect x="5" y="8" width="2" height="1" fill="#e0e0e0"/><rect x="7" y="8" width="1" height="1" fill="#b0b0b0"/><rect x="8" y="8" width="1" height="1" fill="#000000"/><rect x="0" y="9" width="1" height="1" fill="#909090"/><rect x="1" y="9" width="6" height="1" fill="#e0e0e0"/><rect x="7" y="9" width="1" height="1" fill="#b0b0b0"/><rect x="8" y="9" width="1" height="1" fill="#000000"/><rect x="0" y="10" width="1" height="1" fill="#909090"/><rect x="1" y="10" width="7" height="1" fill="#b0b0b0"/><rect x="8" y="10" width="1" height="1" fill="#000000"/><rect x="1" y="11" width="8" height="1" fill="#000000"/></svg>
<div class="t " style="left:44px;top:289px;letter-spacing:0.45px;">16.10.2011 г.</div>
<div class="t r red" style="left:118px;top:289px;width:68px;">-6 835,00</div>
<div class="t r" style="left:191px;top:289px;width:79px;">16 541,55</div>
<div class="t " style="left:277px;top:289px;">Питание</div>
<div class="t " style="left:419px;top:289px;letter-spacing:-0.1px;"></div>
<div class="a" style="left:15px;top:303px;width:12px;height:12px;background:#fff;border:1px solid #000"></div>
<svg class="a" style="left:17px;top:305px" width="8" height="8" viewBox="0 0 8 8"><path d="M0.6 2.6L0.6 5L3 7.4L7.4 3L7.4 0.6L3 5Z" fill="#000"/></svg>
<svg class="a" style="left:31px;top:303px" width="9" height="12" viewBox="0 0 9 12" shape-rendering="crispEdges"><rect x="3" y="0" width="3" height="1" fill="#909090"/><rect x="2" y="1" width="1" height="1" fill="#a0a0a0"/><rect x="3" y="1" width="1" height="1" fill="#ffffff"/><rect x="4" y="1" width="1" height="1" fill="#e0e0e0"/><rect x="5" y="1" width="1" height="1" fill="#ffffff"/><rect x="6" y="1" width="1" height="1" fill="#383838"/><rect x="1" y="2" width="1" height="1" fill="#909090"/><rect x="2" y="2" width="1" height="1" fill="#ffffff"/><rect x="3" y="2" width="1" height="1" fill="#909090"/><rect x="5" y="2" width="1" height="1" fill="#000000"/><rect x="6" y="2" width="1" height="1" fill="#e0e0e0"/><rect x="7" y="2" width="1" height="1" fill="#000000"/><rect x="1" y="3" width="1" height="1" fill="#909090"/><rect x="2" y="3" width="1" height="1" fill="#ffffff"/><rect x="3" y="3" width="1" height="1" fill="#909090"/><rect x="5" y="3" width="1" height="1" fill="#000000"/><rect x="6" y="3" width="1" height="1" fill="#e0e0e0"/><rect x="7" y="3" width="1" height="1" fill="#000000"/><rect x="0" y="4" width="8" height="1" fill="#808080"/><rect x="8" y="4" width="1" height="1" fill="#000000"/><rect x="0" y="5" width="1" height="1" fill="#909090"/><rect x="1" y="5" width="5" height="1" fill="#ffffff"/><rect x="6" y="5" width="1" height="1" fill="#e0e0e0"/><rect x="7" y="5" width="1" height="1" fill="#b0b0b0"/><rect x="8" y="5" width="1" height="1" fill="#000000"/><rect x="0" y="6" width="1" height="1" fill="#909090"/><rect x="1" y="6" width="2" height="1" fill="#ffffff"/><rect x="3" y="6" width="3" height="1" fill="#000000"/><rect x="6" y="6" width="1" height="1" fill="#e0e0e0"/><rect x="7" y="6" width="1" height="1" fill="#b0b0b0"/><rect x="8" y="6" width="1" height="1" fill="#000000"/><rect x="0" y="7" width="1" height="1" fill="#909090"/><rect x="1" y="7" width="2" height="1" fill="#ffffff"/><rect x="3" y="7" width="1" height="1" fill="#e0e0e0"/><rect x="4" y="7" width="1" height="1" fill="#000000"/><rect x="5" y="7" width="2" height="1" fill="#e0e0e0"/><rect x="7" y="7" width="1" height="1" fill="#b0b0b0"/><rect x="8" y="7" width="1" height="1" fill="#000000"/><rect x="0" y="8" width="1" height="1" fill="#909090"/><rect x="1" y="8" width="1" height="1" fill="#ffffff"/><rect x="2" y="8" width="1" height="1" fill="#e0e0e0"/><rect x="3" y="8" width="1" height="1" fill="#ffffff"/><rect x="4" y="8" width="1" height="1" fill="#000000"/><rect x="5" y="8" width="2" height="1" fill="#e0e0e0"/><rect x="7" y="8" width="1" height="1" fill="#b0b0b0"/><rect x="8" y="8" width="1" height="1" fill="#000000"/><rect x="0" y="9" width="1" height="1" fill="#909090"/><rect x="1" y="9" width="6" height="1" fill="#e0e0e0"/><rect x="7" y="9" width="1" height="1" fill="#b0b0b0"/><rect x="8" y="9" width="1" height="1" fill="#000000"/><rect x="0" y="10" width="1" height="1" fill="#909090"/><rect x="1" y="10" width="7" height="1" fill="#b0b0b0"/><rect x="8" y="10" width="1" height="1" fill="#000000"/><rect x="1" y="11" width="8" height="1" fill="#000000"/></svg>
<div class="t " style="left:44px;top:303px;letter-spacing:0.45px;">14.10.2011 г.</div>
<div class="t r red" style="left:118px;top:303px;width:68px;">-68,45</div>
<div class="t r" style="left:191px;top:303px;width:79px;">23 376,55</div>
<div class="t " style="left:277px;top:303px;">Здоровье, медицина</div>
<div class="t " style="left:419px;top:303px;letter-spacing:-0.1px;">Таблетки от кашля</div>
<div class="a" style="left:15px;top:317px;width:12px;height:12px;background:#fff;border:1px solid #000"></div>
<svg class="a" style="left:17px;top:319px" width="8" height="8" viewBox="0 0 8 8"><path d="M0.6 2.6L0.6 5L3 7.4L7.4 3L7.4 0.6L3 5Z" fill="#000"/></svg>
<svg class="a" style="left:31px;top:317px" width="9" height="12" viewBox="0 0 9 12" shape-rendering="crispEdges"><rect x="3" y="0" width="3" height="1" fill="#909090"/><rect x="2" y="1" width="1" height="1" fill="#a0a0a0"/><rect x="3" y="1" width="1" height="1" fill="#ffffff"/><rect x="4" y="1" width="1" height="1" fill="#e0e0e0"/><rect x="5" y="1" width="1" height="1" fill="#ffffff"/><rect x="6" y="1" width="1" height="1" fill="#383838"/><rect x="1" y="2" width="1" height="1" fill="#909090"/><rect x="2" y="2" width="1" height="1" fill="#ffffff"/><rect x="3" y="2" width="1" height="1" fill="#909090"/><rect x="5" y="2" width="1" height="1" fill="#000000"/><rect x="6" y="2" width="1" height="1" fill="#e0e0e0"/><rect x="7" y="2" width="1" height="1" fill="#000000"/><rect x="1" y="3" width="1" height="1" fill="#909090"/><rect x="2" y="3" width="1" height="1" fill="#ffffff"/><rect x="3" y="3" width="1" height="1" fill="#909090"/><rect x="5" y="3" width="1" height="1" fill="#000000"/><rect x="6" y="3" width="1" height="1" fill="#e0e0e0"/><rect x="7" y="3" width="1" height="1" fill="#000000"/><rect x="0" y="4" width="8" height="1" fill="#808080"/><rect x="8" y="4" width="1" height="1" fill="#000000"/><rect x="0" y="5" width="1" height="1" fill="#909090"/><rect x="1" y="5" width="5" height="1" fill="#ffffff"/><rect x="6" y="5" width="1" height="1" fill="#e0e0e0"/><rect x="7" y="5" width="1" height="1" fill="#b0b0b0"/><rect x="8" y="5" width="1" height="1" fill="#000000"/><rect x="0" y="6" width="1" height="1" fill="#909090"/><rect x="1" y="6" width="2" height="1" fill="#ffffff"/><rect x="3" y="6" width="3" height="1" fill="#000000"/><rect x="6" y="6" width="1" height="1" fill="#e0e0e0"/><rect x="7" y="6" width="1" height="1" fill="#b0b0b0"/><rect x="8" y="6" width="1" height="1" fill="#000000"/><rect x="0" y="7" width="1" height="1" fill="#909090"/><rect x="1" y="7" width="2" height="1" fill="#ffffff"/><rect x="3" y="7" width="1" height="1" fill="#e0e0e0"/><rect x="4" y="7" width="1" height="1" fill="#000000"/><rect x="5" y="7" width="2" height="1" fill="#e0e0e0"/><rect x="7" y="7" width="1" height="1" fill="#b0b0b0"/><rect x="8" y="7" width="1" height="1" fill="#000000"/><rect x="0" y="8" width="1" height="1" fill="#909090"/><rect x="1" y="8" width="1" height="1" fill="#ffffff"/><rect x="2" y="8" width="1" height="1" fill="#e0e0e0"/><rect x="3" y="8" width="1" height="1" fill="#ffffff"/><rect x="4" y="8" width="1" height="1" fill="#000000"/><rect x="5" y="8" width="2" height="1" fill="#e0e0e0"/><rect x="7" y="8" width="1" height="1" fill="#b0b0b0"/><rect x="8" y="8" width="1" height="1" fill="#000000"/><rect x="0" y="9" width="1" height="1" fill="#909090"/><rect x="1" y="9" width="6" height="1" fill="#e0e0e0"/><rect x="7" y="9" width="1" height="1" fill="#b0b0b0"/><rect x="8" y="9" width="1" height="1" fill="#000000"/><rect x="0" y="10" width="1" height="1" fill="#909090"/><rect x="1" y="10" width="7" height="1" fill="#b0b0b0"/><rect x="8" y="10" width="1" height="1" fill="#000000"/><rect x="1" y="11" width="8" height="1" fill="#000000"/></svg>
<div class="t " style="left:44px;top:317px;letter-spacing:0.45px;">09.10.2011 г.</div>
<div class="t r red" style="left:118px;top:317px;width:68px;">-5 435,00</div>
<div class="t r" style="left:191px;top:317px;width:79px;">23 445,00</div>
<div class="t " style="left:277px;top:317px;">Питание</div>
<div class="t " style="left:419px;top:317px;letter-spacing:-0.1px;"></div>
<div class="a" style="left:15px;top:331px;width:12px;height:12px;background:#fff;border:1px solid #000"></div>
<svg class="a" style="left:17px;top:333px" width="8" height="8" viewBox="0 0 8 8"><path d="M0.6 2.6L0.6 5L3 7.4L7.4 3L7.4 0.6L3 5Z" fill="#000"/></svg>
<svg class="a" style="left:31px;top:331px" width="9" height="12" viewBox="0 0 9 12" shape-rendering="crispEdges"><rect x="3" y="0" width="3" height="1" fill="#909090"/><rect x="2" y="1" width="1" height="1" fill="#a0a0a0"/><rect x="3" y="1" width="1" height="1" fill="#ffffff"/><rect x="4" y="1" width="1" height="1" fill="#e0e0e0"/><rect x="5" y="1" width="1" height="1" fill="#ffffff"/><rect x="6" y="1" width="1" height="1" fill="#383838"/><rect x="1" y="2" width="1" height="1" fill="#909090"/><rect x="2" y="2" width="1" height="1" fill="#ffffff"/><rect x="3" y="2" width="1" height="1" fill="#909090"/><rect x="5" y="2" width="1" height="1" fill="#000000"/><rect x="6" y="2" width="1" height="1" fill="#e0e0e0"/><rect x="7" y="2" width="1" height="1" fill="#000000"/><rect x="1" y="3" width="1" height="1" fill="#909090"/><rect x="2" y="3" width="1" height="1" fill="#ffffff"/><rect x="3" y="3" width="1" height="1" fill="#909090"/><rect x="5" y="3" width="1" height="1" fill="#000000"/><rect x="6" y="3" width="1" height="1" fill="#e0e0e0"/><rect x="7" y="3" width="1" height="1" fill="#000000"/><rect x="0" y="4" width="8" height="1" fill="#808080"/><rect x="8" y="4" width="1" height="1" fill="#000000"/><rect x="0" y="5" width="1" height="1" fill="#909090"/><rect x="1" y="5" width="5" height="1" fill="#ffffff"/><rect x="6" y="5" width="1" height="1" fill="#e0e0e0"/><rect x="7" y="5" width="1" height="1" fill="#b0b0b0"/><rect x="8" y="5" width="1" height="1" fill="#000000"/><rect x="0" y="6" width="1" height="1" fill="#909090"/><rect x="1" y="6" width="2" height="1" fill="#ffffff"/><rect x="3" y="6" width="3" height="1" fill="#000000"/><rect x="6" y="6" width="1" height="1" fill="#e0e0e0"/><rect x="7" y="6" width="1" height="1" fill="#b0b0b0"/><rect x="8" y="6" width="1" height="1" fill="#000000"/><rect x="0" y="7" width="1" height="1" fill="#909090"/><rect x="1" y="7" width="2" height="1" fill="#ffffff"/><rect x="3" y="7" width="1" height="1" fill="#e0e0e0"/><rect x="4" y="7" width="1" height="1" fill="#000000"/><rect x="5" y="7" width="2" height="1" fill="#e0e0e0"/><rect x="7" y="7" width="1" height="1" fill="#b0b0b0"/><rect x="8" y="7" width="1" height="1" fill="#000000"/><rect x="0" y="8" width="1" height="1" fill="#909090"/><rect x="1" y="8" width="1" height="1" fill="#ffffff"/><rect x="2" y="8" width="1" height="1" fill="#e0e0e0"/><rect x="3" y="8" width="1" height="1" fill="#ffffff"/><rect x="4" y="8" width="1" height="1" fill="#000000"/><rect x="5" y="8" width="2" height="1" fill="#e0e0e0"/><rect x="7" y="8" width="1" height="1" fill="#b0b0b0"/><rect x="8" y="8" width="1" height="1" fill="#000000"/><rect x="0" y="9" width="1" height="1" fill="#909090"/><rect x="1" y="9" width="6" height="1" fill="#e0e0e0"/><rect x="7" y="9" width="1" height="1" fill="#b0b0b0"/><rect x="8" y="9" width="1" height="1" fill="#000000"/><rect x="0" y="10" width="1" height="1" fill="#909090"/><rect x="1" y="10" width="7" height="1" fill="#b0b0b0"/><rect x="8" y="10" width="1" height="1" fill="#000000"/><rect x="1" y="11" width="8" height="1" fill="#000000"/></svg>
<div class="t " style="left:44px;top:331px;letter-spacing:0.45px;">05.10.2011 г.</div>
<div class="t r red" style="left:118px;top:331px;width:68px;">-450,00</div>
<div class="t r" style="left:191px;top:331px;width:79px;">28 880,00</div>
<div class="t " style="left:277px;top:331px;">Телефон</div>
<div class="t " style="left:419px;top:331px;letter-spacing:-0.1px;"></div>
<div class="a" style="left:15px;top:345px;width:12px;height:12px;background:#fff;border:1px solid #000"></div>
<svg class="a" style="left:17px;top:347px" width="8" height="8" viewBox="0 0 8 8"><path d="M0.6 2.6L0.6 5L3 7.4L7.4 3L7.4 0.6L3 5Z" fill="#000"/></svg>
<svg class="a" style="left:31px;top:345px" width="9" height="12" viewBox="0 0 9 12" shape-rendering="crispEdges"><rect x="3" y="0" width="3" height="1" fill="#909090"/><rect x="2" y="1" width="1" height="1" fill="#a0a0a0"/><rect x="3" y="1" width="1" height="1" fill="#ffffff"/><rect x="4" y="1" width="1" height="1" fill="#e0e0e0"/><rect x="5" y="1" width="1" height="1" fill="#ffffff"/><rect x="6" y="1" width="1" height="1" fill="#383838"/><rect x="1" y="2" width="1" height="1" fill="#909090"/><rect x="2" y="2" width="1" height="1" fill="#ffffff"/><rect x="3" y="2" width="1" height="1" fill="#909090"/><rect x="5" y="2" width="1" height="1" fill="#000000"/><rect x="6" y="2" width="1" height="1" fill="#e0e0e0"/><rect x="7" y="2" width="1" height="1" fill="#000000"/><rect x="1" y="3" width="1" height="1" fill="#909090"/><rect x="2" y="3" width="1" height="1" fill="#ffffff"/><rect x="3" y="3" width="1" height="1" fill="#909090"/><rect x="5" y="3" width="1" height="1" fill="#000000"/><rect x="6" y="3" width="1" height="1" fill="#e0e0e0"/><rect x="7" y="3" width="1" height="1" fill="#000000"/><rect x="0" y="4" width="8" height="1" fill="#808080"/><rect x="8" y="4" width="1" height="1" fill="#000000"/><rect x="0" y="5" width="1" height="1" fill="#909090"/><rect x="1" y="5" width="5" height="1" fill="#ffffff"/><rect x="6" y="5" width="1" height="1" fill="#e0e0e0"/><rect x="7" y="5" width="1" height="1" fill="#b0b0b0"/><rect x="8" y="5" width="1" height="1" fill="#000000"/><rect x="0" y="6" width="1" height="1" fill="#909090"/><rect x="1" y="6" width="2" height="1" fill="#ffffff"/><rect x="3" y="6" width="3" height="1" fill="#000000"/><rect x="6" y="6" width="1" height="1" fill="#e0e0e0"/><rect x="7" y="6" width="1" height="1" fill="#b0b0b0"/><rect x="8" y="6" width="1" height="1" fill="#000000"/><rect x="0" y="7" width="1" height="1" fill="#909090"/><rect x="1" y="7" width="2" height="1" fill="#ffffff"/><rect x="3" y="7" width="1" height="1" fill="#e0e0e0"/><rect x="4" y="7" width="1" height="1" fill="#000000"/><rect x="5" y="7" width="2" height="1" fill="#e0e0e0"/><rect x="7" y="7" width="1" height="1" fill="#b0b0b0"/><rect x="8" y="7" width="1" height="1" fill="#000000"/><rect x="0" y="8" width="1" height="1" fill="#909090"/><rect x="1" y="8" width="1" height="1" fill="#ffffff"/><rect x="2" y="8" width="1" height="1" fill="#e0e0e0"/><rect x="3" y="8" width="1" height="1" fill="#ffffff"/><rect x="4" y="8" width="1" height="1" fill="#000000"/><rect x="5" y="8" width="2" height="1" fill="#e0e0e0"/><rect x="7" y="8" width="1" height="1" fill="#b0b0b0"/><rect x="8" y="8" width="1" height="1" fill="#000000"/><rect x="0" y="9" width="1" height="1" fill="#909090"/><rect x="1" y="9" width="6" height="1" fill="#e0e0e0"/><rect x="7" y="9" width="1" height="1" fill="#b0b0b0"/><rect x="8" y="9" width="1" height="1" fill="#000000"/><rect x="0" y="10" width="1" height="1" fill="#909090"/><rect x="1" y="10" width="7" height="1" fill="#b0b0b0"/><rect x="8" y="10" width="1" height="1" fill="#000000"/><rect x="1" y="11" width="8" height="1" fill="#000000"/></svg>
<div class="t " style="left:44px;top:345px;letter-spacing:0.45px;">04.10.2011 г.</div>
<div class="t r red" style="left:118px;top:345px;width:68px;">-2 865,00</div>
<div class="t r" style="left:191px;top:345px;width:79px;">29 330,00</div>
<div class="t " style="left:277px;top:345px;">Коммуналка</div>
<div class="t " style="left:419px;top:345px;letter-spacing:-0.1px;"></div>
<div class="a" style="left:15px;top:359px;width:12px;height:12px;background:#fff;border:1px solid #000"></div>
<svg class="a" style="left:17px;top:361px" width="8" height="8" viewBox="0 0 8 8"><path d="M0.6 2.6L0.6 5L3 7.4L7.4 3L7.4 0.6L3 5Z" fill="#000"/></svg>
<svg class="a" style="left:31px;top:359px" width="9" height="12" viewBox="0 0 9 12" shape-rendering="crispEdges"><rect x="3" y="0" width="3" height="1" fill="#909090"/><rect x="2" y="1" width="1" height="1" fill="#a0a0a0"/><rect x="3" y="1" width="1" height="1" fill="#ffffff"/><rect x="4" y="1" width="1" height="1" fill="#e0e0e0"/><rect x="5" y="1" width="1" height="1" fill="#ffffff"/><rect x="6" y="1" width="1" height="1" fill="#383838"/><rect x="1" y="2" width="1" height="1" fill="#909090"/><rect x="2" y="2" width="1" height="1" fill="#ffffff"/><rect x="3" y="2" width="1" height="1" fill="#909090"/><rect x="5" y="2" width="1" height="1" fill="#000000"/><rect x="6" y="2" width="1" height="1" fill="#e0e0e0"/><rect x="7" y="2" width="1" height="1" fill="#000000"/><rect x="1" y="3" width="1" height="1" fill="#909090"/><rect x="2" y="3" width="1" height="1" fill="#ffffff"/><rect x="3" y="3" width="1" height="1" fill="#909090"/><rect x="5" y="3" width="1" height="1" fill="#000000"/><rect x="6" y="3" width="1" height="1" fill="#e0e0e0"/><rect x="7" y="3" width="1" height="1" fill="#000000"/><rect x="0" y="4" width="8" height="1" fill="#808080"/><rect x="8" y="4" width="1" height="1" fill="#000000"/><rect x="0" y="5" width="1" height="1" fill="#909090"/><rect x="1" y="5" width="5" height="1" fill="#ffffff"/><rect x="6" y="5" width="1" height="1" fill="#e0e0e0"/><rect x="7" y="5" width="1" height="1" fill="#b0b0b0"/><rect x="8" y="5" width="1" height="1" fill="#000000"/><rect x="0" y="6" width="1" height="1" fill="#909090"/><rect x="1" y="6" width="2" height="1" fill="#ffffff"/><rect x="3" y="6" width="3" height="1" fill="#000000"/><rect x="6" y="6" width="1" height="1" fill="#e0e0e0"/><rect x="7" y="6" width="1" height="1" fill="#b0b0b0"/><rect x="8" y="6" width="1" height="1" fill="#000000"/><rect x="0" y="7" width="1" height="1" fill="#909090"/><rect x="1" y="7" width="2" height="1" fill="#ffffff"/><rect x="3" y="7" width="1" height="1" fill="#e0e0e0"/><rect x="4" y="7" width="1" height="1" fill="#000000"/><rect x="5" y="7" width="2" height="1" fill="#e0e0e0"/><rect x="7" y="7" width="1" height="1" fill="#b0b0b0"/><rect x="8" y="7" width="1" height="1" fill="#000000"/><rect x="0" y="8" width="1" height="1" fill="#909090"/><rect x="1" y="8" width="1" height="1" fill="#ffffff"/><rect x="2" y="8" width="1" height="1" fill="#e0e0e0"/><rect x="3" y="8" width="1" height="1" fill="#ffffff"/><rect x="4" y="8" width="1" height="1" fill="#000000"/><rect x="5" y="8" width="2" height="1" fill="#e0e0e0"/><rect x="7" y="8" width="1" height="1" fill="#b0b0b0"/><rect x="8" y="8" width="1" height="1" fill="#000000"/><rect x="0" y="9" width="1" height="1" fill="#909090"/><rect x="1" y="9" width="6" height="1" fill="#e0e0e0"/><rect x="7" y="9" width="1" height="1" fill="#b0b0b0"/><rect x="8" y="9" width="1" height="1" fill="#000000"/><rect x="0" y="10" width="1" height="1" fill="#909090"/><rect x="1" y="10" width="7" height="1" fill="#b0b0b0"/><rect x="8" y="10" width="1" height="1" fill="#000000"/><rect x="1" y="11" width="8" height="1" fill="#000000"/></svg>
<div class="t " style="left:44px;top:359px;letter-spacing:0.45px;">03.10.2011 г.</div>
<div class="t r" style="left:118px;top:359px;width:68px;">10 000,00</div>
<div class="t r" style="left:191px;top:359px;width:79px;">32 195,00</div>
<div class="t " style="left:277px;top:359px;">Премии</div>
<div class="t " style="left:419px;top:359px;letter-spacing:-0.1px;"></div>
<div class="a" style="left:15px;top:373px;width:12px;height:12px;background:#fff;border:1px solid #000"></div>
<svg class="a" style="left:17px;top:375px" width="8" height="8" viewBox="0 0 8 8"><path d="M0.6 2.6L0.6 5L3 7.4L7.4 3L7.4 0.6L3 5Z" fill="#000"/></svg>
<svg class="a" style="left:31px;top:373px" width="9" height="12" viewBox="0 0 9 12" shape-rendering="crispEdges"><rect x="3" y="0" width="3" height="1" fill="#909090"/><rect x="2" y="1" width="1" height="1" fill="#a0a0a0"/><rect x="3" y="1" width="1" height="1" fill="#ffffff"/><rect x="4" y="1" width="1" height="1" fill="#e0e0e0"/><rect x="5" y="1" width="1" height="1" fill="#ffffff"/><rect x="6" y="1" width="1" height="1" fill="#383838"/><rect x="1" y="2" width="1" height="1" fill="#909090"/><rect x="2" y="2" width="1" height="1" fill="#ffffff"/><rect x="3" y="2" width="1" height="1" fill="#909090"/><rect x="5" y="2" width="1" height="1" fill="#000000"/><rect x="6" y="2" width="1" height="1" fill="#e0e0e0"/><rect x="7" y="2" width="1" height="1" fill="#000000"/><rect x="1" y="3" width="1" height="1" fill="#909090"/><rect x="2" y="3" width="1" height="1" fill="#ffffff"/><rect x="3" y="3" width="1" height="1" fill="#909090"/><rect x="5" y="3" width="1" height="1" fill="#000000"/><rect x="6" y="3" width="1" height="1" fill="#e0e0e0"/><rect x="7" y="3" width="1" height="1" fill="#000000"/><rect x="0" y="4" width="8" height="1" fill="#808080"/><rect x="8" y="4" width="1" height="1" fill="#000000"/><rect x="0" y="5" width="1" height="1" fill="#909090"/><rect x="1" y="5" width="5" height="1" fill="#ffffff"/><rect x="6" y="5" width="1" height="1" fill="#e0e0e0"/><rect x="7" y="5" width="1" height="1" fill="#b0b0b0"/><rect x="8" y="5" width="1" height="1" fill="#000000"/><rect x="0" y="6" width="1" height="1" fill="#909090"/><rect x="1" y="6" width="2" height="1" fill="#ffffff"/><rect x="3" y="6" width="3" height="1" fill="#000000"/><rect x="6" y="6" width="1" height="1" fill="#e0e0e0"/><rect x="7" y="6" width="1" height="1" fill="#b0b0b0"/><rect x="8" y="6" width="1" height="1" fill="#000000"/><rect x="0" y="7" width="1" height="1" fill="#909090"/><rect x="1" y="7" width="2" height="1" fill="#ffffff"/><rect x="3" y="7" width="1" height="1" fill="#e0e0e0"/><rect x="4" y="7" width="1" height="1" fill="#000000"/><rect x="5" y="7" width="2" height="1" fill="#e0e0e0"/><rect x="7" y="7" width="1" height="1" fill="#b0b0b0"/><rect x="8" y="7" width="1" height="1" fill="#000000"/><rect x="0" y="8" width="1" height="1" fill="#909090"/><rect x="1" y="8" width="1" height="1" fill="#ffffff"/><rect x="2" y="8" width="1" height="1" fill="#e0e0e0"/><rect x="3" y="8" width="1" height="1" fill="#ffffff"/><rect x="4" y="8" width="1" height="1" fill="#000000"/><rect x="5" y="8" width="2" height="1" fill="#e0e0e0"/><rect x="7" y="8" width="1" height="1" fill="#b0b0b0"/><rect x="8" y="8" width="1" height="1" fill="#000000"/><rect x="0" y="9" width="1" height="1" fill="#909090"/><rect x="1" y="9" width="6" height="1" fill="#e0e0e0"/><rect x="7" y="9" width="1" height="1" fill="#b0b0b0"/><rect x="8" y="9" width="1" height="1" fill="#000000"/><rect x="0" y="10" width="1" height="1" fill="#909090"/><rect x="1" y="10" width="7" height="1" fill="#b0b0b0"/><rect x="8" y="10" width="1" height="1" fill="#000000"/><rect x="1" y="11" width="8" height="1" fill="#000000"/></svg>
<div class="t " style="left:44px;top:373px;letter-spacing:0.45px;">03.10.2011 г.</div>
<div class="t r" style="left:118px;top:373px;width:68px;">20 000,00</div>
<div class="t r" style="left:191px;top:373px;width:79px;">22 195,00</div>
<div class="t " style="left:277px;top:373px;">Зарплата</div>
<div class="t " style="left:419px;top:373px;letter-spacing:-0.1px;">За сентябрь месяц</div>
<div class="a" style="left:15px;top:387px;width:12px;height:12px;background:#fff;border:1px solid #000"></div>
<svg class="a" style="left:17px;top:389px" width="8" height="8" viewBox="0 0 8 8"><path d="M0.6 2.6L0.6 5L3 7.4L7.4 3L7.4 0.6L3 5Z" fill="#000"/></svg>
<svg class="a" style="left:31px;top:387px" width="9" height="12" viewBox="0 0 9 12" shape-rendering="crispEdges"><rect x="3" y="0" width="3" height="1" fill="#909090"/><rect x="2" y="1" width="1" height="1" fill="#a0a0a0"/><rect x="3" y="1" width="1" height="1" fill="#ffffff"/><rect x="4" y="1" width="1" height="1" fill="#e0e0e0"/><rect x="5" y="1" width="1" height="1" fill="#ffffff"/><rect x="6" y="1" width="1" height="1" fill="#383838"/><rect x="1" y="2" width="1" height="1" fill="#909090"/><rect x="2" y="2" width="1" height="1" fill="#ffffff"/><rect x="3" y="2" width="1" height="1" fill="#909090"/><rect x="5" y="2" width="1" height="1" fill="#000000"/><rect x="6" y="2" width="1" height="1" fill="#e0e0e0"/><rect x="7" y="2" width="1" height="1" fill="#000000"/><rect x="1" y="3" width="1" height="1" fill="#909090"/><rect x="2" y="3" width="1" height="1" fill="#ffffff"/><rect x="3" y="3" width="1" height="1" fill="#909090"/><rect x="5" y="3" width="1" height="1" fill="#000000"/><rect x="6" y="3" width="1" height="1" fill="#e0e0e0"/><rect x="7" y="3" width="1" height="1" fill="#000000"/><rect x="0" y="4" width="8" height="1" fill="#808080"/><rect x="8" y="4" width="1" height="1" fill="#000000"/><rect x="0" y="5" width="1" height="1" fill="#909090"/><rect x="1" y="5" width="5" height="1" fill="#ffffff"/><rect x="6" y="5" width="1" height="1" fill="#e0e0e0"/><rect x="7" y="5" width="1" height="1" fill="#b0b0b0"/><rect x="8" y="5" width="1" height="1" fill="#000000"/><rect x="0" y="6" width="1" height="1" fill="#909090"/><rect x="1" y="6" width="2" height="1" fill="#ffffff"/><rect x="3" y="6" width="3" height="1" fill="#000000"/><rect x="6" y="6" width="1" height="1" fill="#e0e0e0"/><rect x="7" y="6" width="1" height="1" fill="#b0b0b0"/><rect x="8" y="6" width="1" height="1" fill="#000000"/><rect x="0" y="7" width="1" height="1" fill="#909090"/><rect x="1" y="7" width="2" height="1" fill="#ffffff"/><rect x="3" y="7" width="1" height="1" fill="#e0e0e0"/><rect x="4" y="7" width="1" height="1" fill="#000000"/><rect x="5" y="7" width="2" height="1" fill="#e0e0e0"/><rect x="7" y="7" width="1" height="1" fill="#b0b0b0"/><rect x="8" y="7" width="1" height="1" fill="#000000"/><rect x="0" y="8" width="1" height="1" fill="#909090"/><rect x="1" y="8" width="1" height="1" fill="#ffffff"/><rect x="2" y="8" width="1" height="1" fill="#e0e0e0"/><rect x="3" y="8" width="1" height="1" fill="#ffffff"/><rect x="4" y="8" width="1" height="1" fill="#000000"/><rect x="5" y="8" width="2" height="1" fill="#e0e0e0"/><rect x="7" y="8" width="1" height="1" fill="#b0b0b0"/><rect x="8" y="8" width="1" height="1" fill="#000000"/><rect x="0" y="9" width="1" height="1" fill="#909090"/><rect x="1" y="9" width="6" height="1" fill="#e0e0e0"/><rect x="7" y="9" width="1" height="1" fill="#b0b0b0"/><rect x="8" y="9" width="1" height="1" fill="#000000"/><rect x="0" y="10" width="1" height="1" fill="#909090"/><rect x="1" y="10" width="7" height="1" fill="#b0b0b0"/><rect x="8" y="10" width="1" height="1" fill="#000000"/><rect x="1" y="11" width="8" height="1" fill="#000000"/></svg>
<div class="t " style="left:44px;top:387px;letter-spacing:0.45px;">02.10.2011 г.</div>
<div class="t r red" style="left:118px;top:387px;width:68px;">-6 459,00</div>
<div class="t r" style="left:191px;top:387px;width:79px;">2 195,00</div>
<div class="t " style="left:277px;top:387px;">Питание</div>
<div class="t " style="left:419px;top:387px;letter-spacing:-0.1px;"></div>
<div class="a g" style="left:13px;top:201px;width:731px;height:1px;"></div>
<div class="a g" style="left:13px;top:201px;width:1px;height:257px;"></div>
<div class="a w" style="left:13px;top:458px;width:732px;height:1px;"></div>
<div class="a w" style="left:744px;top:201px;width:1px;height:258px;"></div>
<div class="sunk" style="left:13px;top:465px;width:130px;height:18px"></div>
<div class="sunk" style="left:145px;top:465px;width:183px;height:18px"></div>
<div class="sunk" style="left:330px;top:465px;width:179px;height:18px"></div>
<div class="sunk" style="left:511px;top:465px;width:234px;height:18px"></div>
<div class="t " style="left:16px;top:468px;">Операций, выбрано:</div>
<div class="t r" style="left:100px;top:468px;width:39px;">1</div>
<div class="t " style="left:148px;top:468px;">Приход, выбрано:</div>
<div class="t r" style="left:250px;top:468px;width:75px;">0,00</div>
<div class="t " style="left:333px;top:468px;">Расход, выбрано:</div>
<div class="t r" style="left:420px;top:468px;width:86px;color:#c00000;letter-spacing:-0.15px;">-4 682,00 RUR</div>
</body></html>
